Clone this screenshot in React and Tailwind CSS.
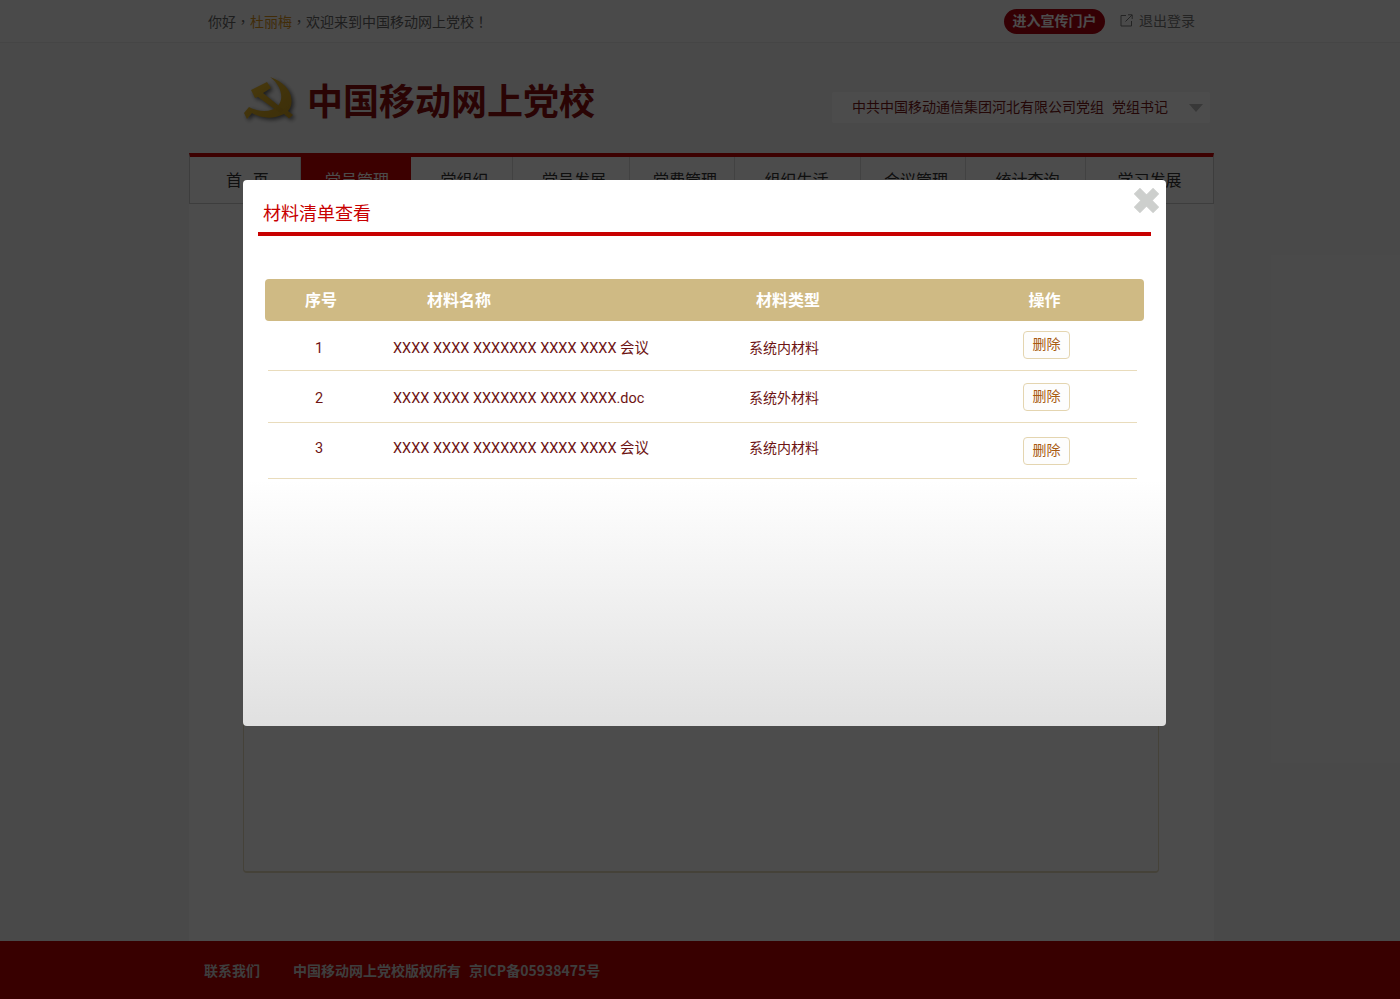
import React from 'react';

const font = '[font-family:"Noto_Sans_CJK_SC","Open_Sans",sans-serif]';
const centered = '[font-family:"Noto_Sans_CJK_TC",sans-serif]';

const navItems = [
    { label: '首\u00a0\u00a0\u00a0页', offset: 'pl-[5px]' },
    { label: '党员管理', offset: 'pl-[2px]' },
    { label: '党组织', offset: 'pl-[6px]' },
    { label: '党员发展', offset: 'pl-[6px]' },
    { label: '党费管理', offset: 'pl-[6px]' },
    { label: '组织生活', offset: 'pr-[2px]' },
    { label: '会议管理', offset: 'pl-[6px]' },
    { label: '统计查询', offset: 'pl-[4px]' },
    { label: '学习发展', offset: '' },
];

const rows = [
    { id: 1, name: 'XXXX XXXX XXXXXXX XXXX XXXX 会议', type: '系统内材料', height: 'h-[50px]', pad: 'pt-[17px]', typePad: 'pt-[15px]', btn: 'mt-[10px]' },
    { id: 2, name: 'XXXX XXXX XXXXXXX XXXX XXXX.doc', type: '系统外材料', height: 'h-[52px]', pad: 'pt-[17px]', typePad: 'pt-[15px]', btn: 'mt-[12px]' },
    { id: 3, name: 'XXXX XXXX XXXXXXX XXXX XXXX 会议', type: '系统内材料', height: 'h-[56px]', pad: 'pt-[15px]', typePad: 'pt-[13px]', btn: 'mt-[14px]' },
];

function PartyLogo() {
    return (
        <svg width="60" height="56" viewBox="0 0 60 56" className="drop-shadow-[2px_2px_2px_rgba(0,0,0,0.6)]">
            <defs>
                <linearGradient id="gold" x1="0" y1="0" x2="1" y2="1">
                    <stop offset="0" stopColor="#f2c230" />
                    <stop offset="1" stopColor="#c99a1e" />
                </linearGradient>
            </defs>
            <path d="M32 5 C44 9 53 17 53.5 28 C54 33 52 37 50 39 L55 43 L51 46.5 L46 42 C36 47 24 47 14 41 L9 47 L6 41 L11 35 C22 41 34 40 40 34 C46 27 44 14 32 5 Z" fill="url(#gold)" />
            <path d="M13 18 L29 10 L33 16 L25 21 L46 38 L42 41 L20 25 L17 26 Z" fill="url(#gold)" />
        </svg>
    );
}

function CloseIcon() {
    return (
        <svg width="25" height="25" viewBox="2 2 21 21">
            <path d="M2.5 7 L7 2.5 L12.5 8 L18 2.5 L22.5 7 L17 12.5 L22.5 18 L18 22.5 L12.5 17 L7 22.5 L2.5 18 L8 12.5 Z" fill="#cdcfcd" stroke="#cdcfcd" strokeWidth="1" strokeLinejoin="round" />
        </svg>
    );
}

function ExitIcon() {
    return (
        <svg width="13" height="13" viewBox="0 0 13 13" fill="none" stroke="#777" strokeWidth="1">
            <path d="M6 1.5 H1 V12 H11.5 V7" />
            <path d="M5.5 7.5 L12 1 M8 0.8 H12.2 V5" />
        </svg>
    );
}

export default function App() {
    return (
        <div className={`relative h-[999px] overflow-hidden bg-[#f6f6f6] flex flex-col ${font}`}>
            {/* page behind the dialog */}
            <div className="h-[43px] shrink-0 border-b border-[#e8e8e8] bg-[#f9f9f9]">
                <div className="ml-[208px] w-[987px] h-[42px] flex items-center justify-between text-sm text-[#666]">
                    <div>你好<span className={centered}>，</span><span className="text-[#d9951d]">杜丽梅</span><span className={centered}>，</span>欢迎来到中国移动网上党校<span className={centered}>！</span></div>
                    <div className="flex items-center">
                        <div className="h-[25px] w-[101px] pb-[2px] rounded-full bg-[#b00010] text-white font-bold flex items-center justify-center">进入宣传门户</div>
                        <div className="ml-[15px] -mt-[2px]"><ExitIcon /></div>
                        <span className="ml-[6px] -mt-[2px] text-[#777]">退出登录</span>
                    </div>
                </div>
            </div>

            <div className="h-[110px] shrink-0 ml-[189px] w-[1025px] flex">
                <div className="ml-[49px] mt-[29px]"><PartyLogo /></div>
                <div className="ml-[9px] mt-[29px] text-[36px] leading-[54px] h-[54px] font-bold text-[#8e1010]">中国移动网上党校</div>
                <div className="absolute left-[832px] top-[92px] w-[378px] h-[31px] rounded-[2px] bg-white flex items-start pt-[4px] pl-[20px] text-sm text-[#7a1a1a]">
                    <span>中共中国移动通信集团河北有限公司党组</span>
                    <span className="ml-[8px]">党组书记</span>
                    <div className="absolute right-[7px] top-[12px] w-0 h-0 border-x-[7px] border-x-transparent border-t-[8px] border-t-[#bbb]"></div>
                </div>
            </div>

            <div className="ml-[189px] w-[1025px] flex-1 bg-white flex flex-col">
                <div className="h-[51px] shrink-0 border-t-4 border-[#c80000] border-b border-b-[#ccc] border-x border-x-[#ccc] grid grid-cols-[111px_110px_102px_117px_105px_126px_105px_120px_127px] text-base text-[#333]">
                    {navItems.map((item, i) => (
                        <div key={item.label} className={`pb-[2px] flex items-center justify-center ${item.offset} ${i === 1 ? 'bg-[#c80000] text-white' : 'border-r border-[#ddd] last:border-r-0'}`}>{item.label}</div>
                    ))}
                </div>
                <div className="ml-[54px] mt-[20px] w-[916px] h-[649px] border border-[#e6dcc0] border-b-2 rounded-[4px]"></div>
            </div>

            <div className="h-[58px] shrink-0 bg-[#bb0000] flex items-center pl-[204px] text-sm font-bold text-[#cfcfcf]">
                <span>联系我们</span>
                <span className="ml-[33px]">中国移动网上党校版权所有</span>
                <span className="ml-[8px]">京ICP备05938475号</span>
            </div>

            {/* dark overlay */}
            <div className="absolute inset-0 bg-black/70"></div>

            {/* dialog */}
            <div className="absolute left-[243px] top-[180px] w-[923px] h-[546px] rounded-[4px] bg-[linear-gradient(180deg,#ffffff_0%,#ffffff_55%,#e0e0e0_100%)]">
                <div className="absolute right-[7px] top-[8px]"><CloseIcon /></div>
                <div className="mx-[15px] h-[56px] border-b-4 border-[#c80000] pl-[5px] pt-[18px] text-lg leading-[28px] text-[#c80000]">材料清单查看</div>
                <div className="ml-[22px] mt-[43px] w-[879px] h-[42px] rounded-[4px] bg-[#cfba84] pb-[2px] text-base font-bold text-white grid grid-cols-[112px_164px_370px_233px] items-center">
                    <div className="text-center">序号</div>
                    <div className="text-center">材料名称</div>
                    <div className="text-center pl-[124px]">材料类型</div>
                    <div className="text-center pl-[34px]">操作</div>
                </div>
                <div className="ml-[25px] w-[869px] text-sm text-[#6e1414]">
                    {rows.map((row) => (
                        <div key={row.id} className={`${row.height} border-b border-[#e9dcbc] grid grid-cols-[125px_356px_274px_114px]`}>
                            <div className={`${row.pad} text-center pr-[23px] text-[14.5px] leading-[22px] [font-family:Roboto,"Noto_Sans_CJK_SC",sans-serif]`}>{row.id}</div>
                            <div className={`${row.pad} text-[14.5px] leading-[22px] whitespace-nowrap [font-family:Roboto,"Noto_Sans_CJK_SC",sans-serif]`}>{row.name}</div>
                            <div className={`${row.typePad} leading-[22px]`}>{row.type}</div>
                            <div className={row.btn}>
                                <div className="w-[47px] h-[28px] pb-[5px] rounded-[4px] border border-[#e4d5b0] bg-[#fdfdfd] text-sm text-[#a85a10] flex items-center justify-center">删除</div>
                            </div>
                        </div>
                    ))}
                </div>
            </div>
        </div>
    );
}
